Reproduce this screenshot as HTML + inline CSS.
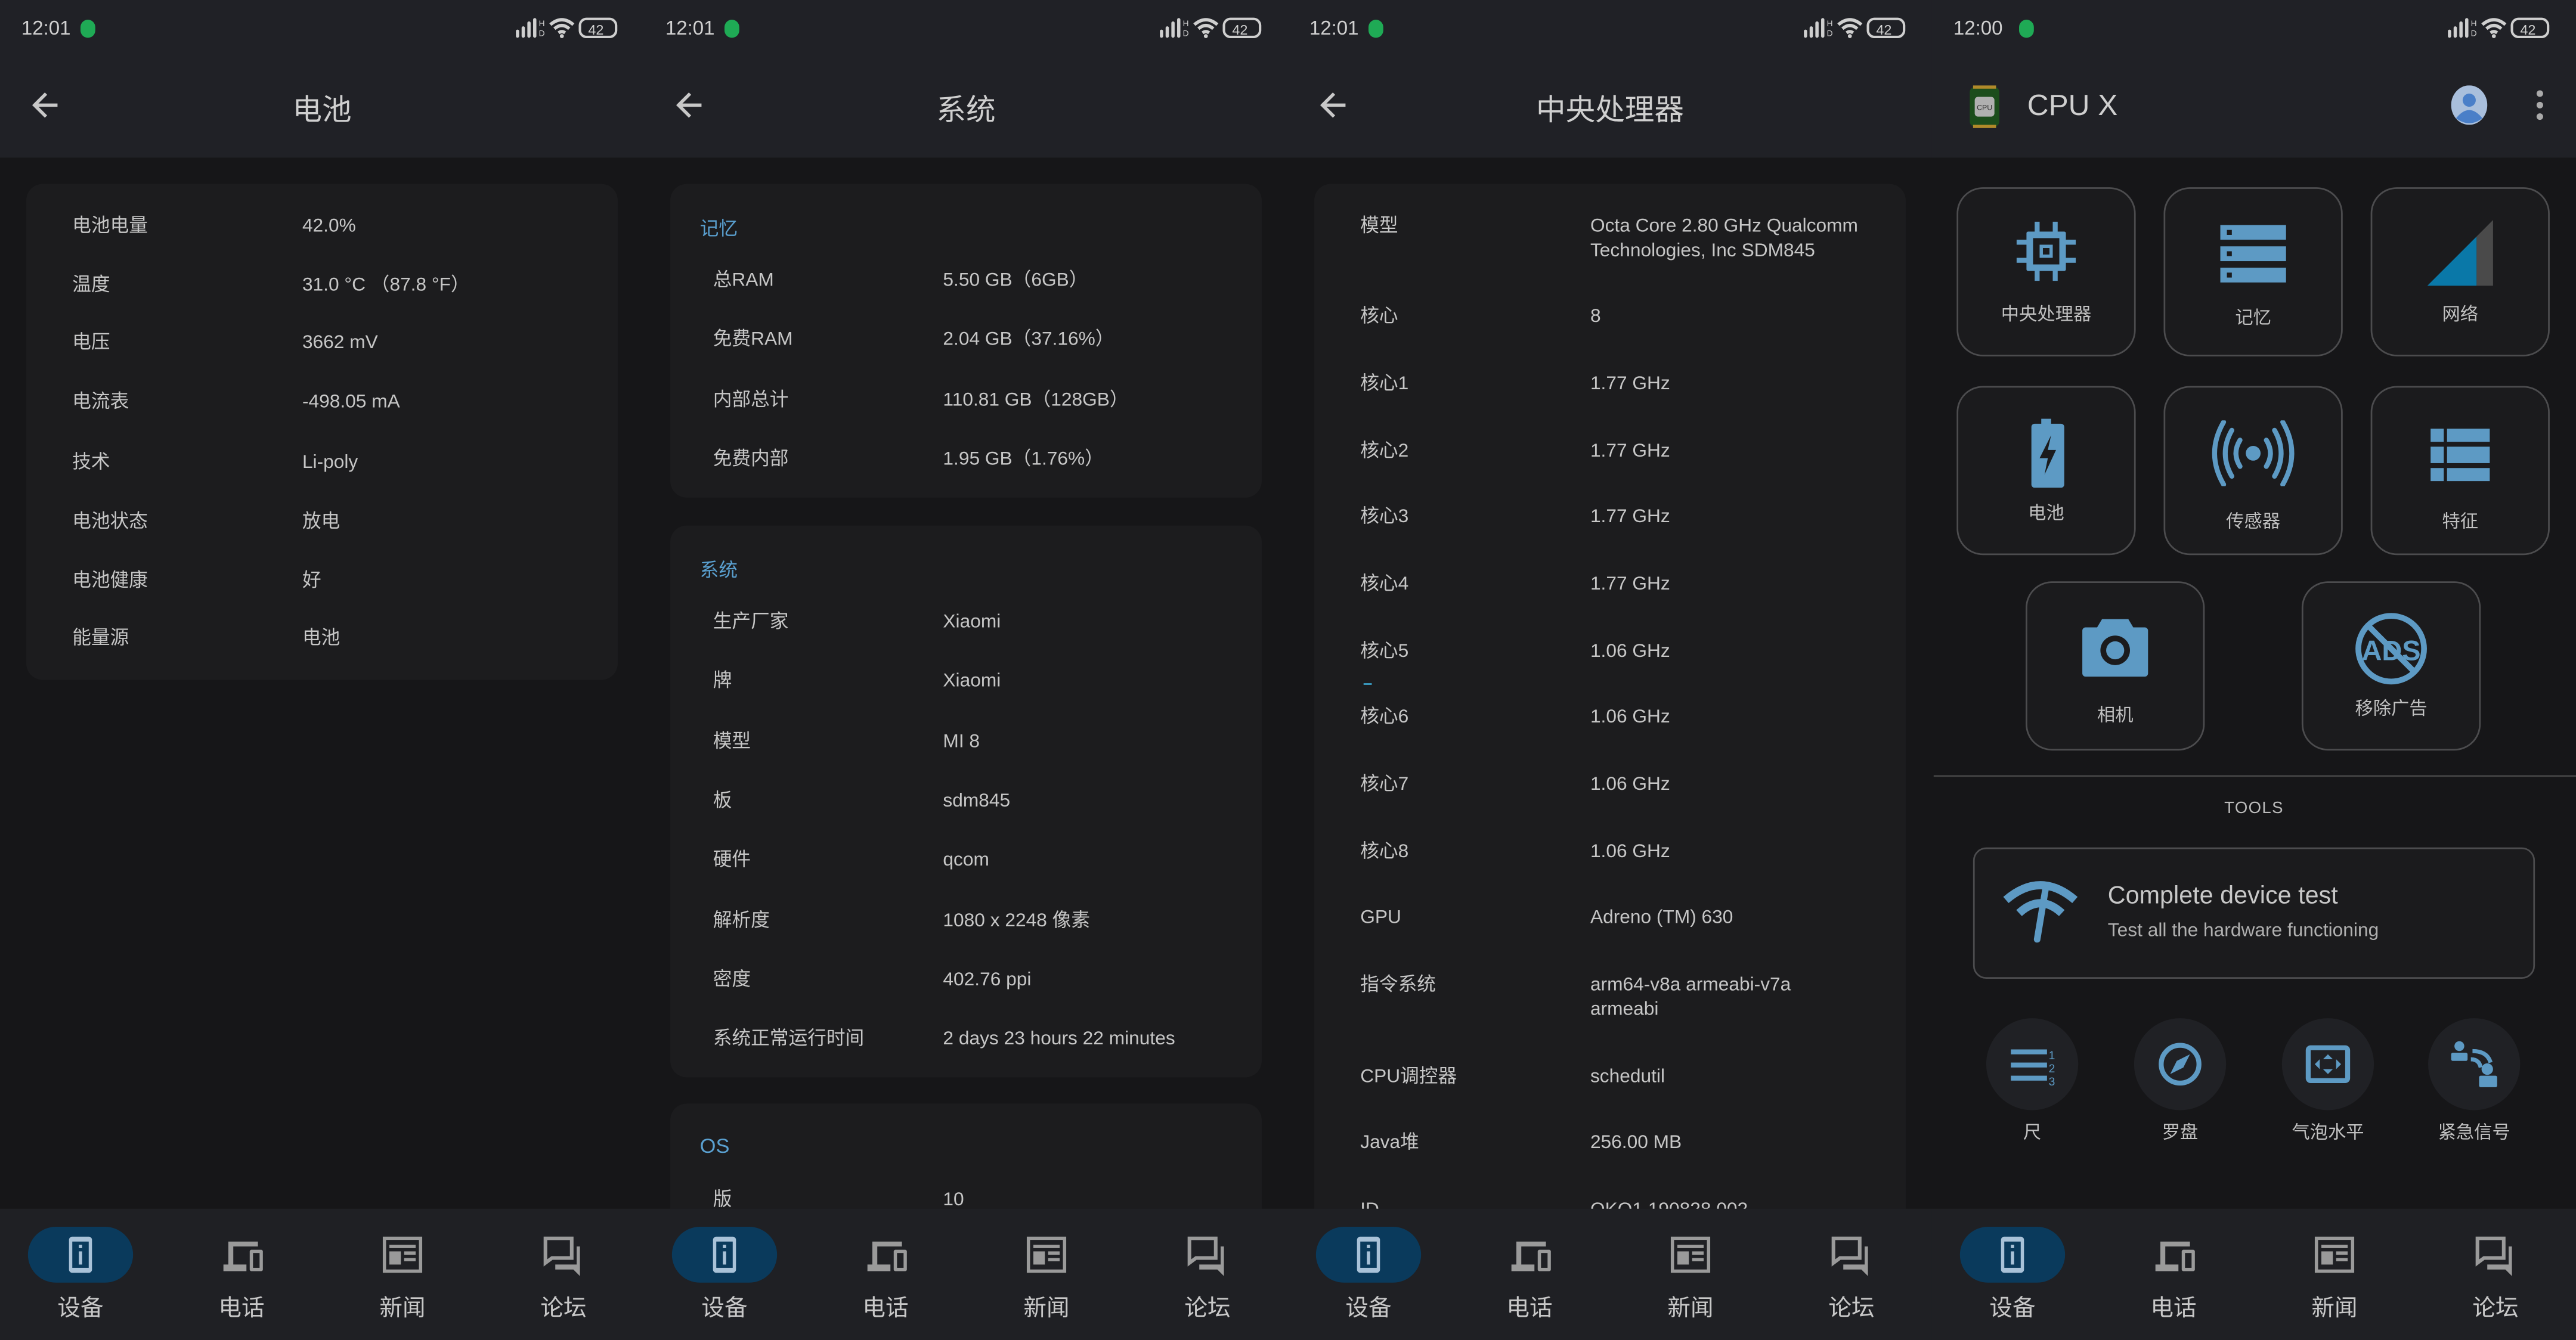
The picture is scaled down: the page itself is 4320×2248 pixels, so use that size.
<!DOCTYPE html>
<html><head><meta charset="utf-8">
<style>
html,body{margin:0;padding:0;background:#161618;width:4320px;height:2248px;overflow:hidden}
#w{position:absolute;left:0;top:0;width:1568px;height:816px;transform:scale(2.755102);transform-origin:0 0;font-family:"Liberation Sans","Noto Sans CJK SC",sans-serif;color:#c4c4c4}
.p{position:absolute;top:0;width:392px;height:816px;background:#161618;overflow:hidden}
.hd{position:absolute;left:0;top:0;width:392px;height:96px;background:#202126}
.tm{position:absolute;left:13px;top:10px;font-size:12px;color:#d0d0d0}
.dot{position:absolute;left:49px;top:12px;width:9px;height:11px;border-radius:5px;background:#1faa55}
.sb{position:absolute;right:14px;top:10px}
.ttl{position:absolute;left:0;width:392px;top:53px;text-align:center;font-size:18px;color:#cfcfcf}
.bk{position:absolute;left:18px;top:54px}
.cd{position:absolute;background:#1c1c1e;border-radius:10px}
.r{position:absolute;font-size:11.5px;line-height:15px;color:#c6c6c6;white-space:nowrap}
.sec{position:absolute;font-size:11.5px;color:#5aa0d0}
.nav{position:absolute;left:0;top:736px;width:392px;height:80px;background:#1f2024}
.ni{position:absolute;top:17px;width:40px;margin-left:-20px;text-align:center}
.nl{position:absolute;top:50px;width:60px;margin-left:-30px;text-align:center;font-size:14px;color:#c8c8c8}
.pill{position:absolute;left:17px;top:11px;width:64px;height:34px;border-radius:17px;background:#0a3a5c}
.tile{position:absolute;width:107px;height:101px;border:1.3px solid #4c4c4e;border-radius:16px;background:#1b1b1d}
.tl{position:absolute;left:0;width:100%;text-align:center;font-size:11px;color:#c0c0c0}
.ti{position:absolute;left:0;width:100%;text-align:center}
.circ{position:absolute;width:56px;height:56px;border-radius:50%;background:#202125}
.cl{position:absolute;width:90px;text-align:center;font-size:11px;color:#c0c0c0}
</style></head><body><div id="w">

<svg width="0" height="0" style="position:absolute">
<defs>
<g id="sbi">
<rect x="0" y="8" width="2" height="5" rx="1" fill="#cfcfcf"/><rect x="3.5" y="6" width="2" height="7" rx="1" fill="#cfcfcf"/><rect x="7" y="3" width="2" height="10" rx="1" fill="#cfcfcf"/><rect x="10.5" y="1" width="2" height="12" rx="1" fill="#cfcfcf"/>
<text x="14" y="6" font-size="5" fill="#cfcfcf" font-family="Liberation Sans">H</text><text x="14" y="12" font-size="5" fill="#cfcfcf" font-family="Liberation Sans">D</text>
<path d="M21 5 Q28 -1 35 5 M23.5 7.5 Q28 3.5 32.5 7.5 M26 10 Q28 8.5 30 10" stroke="#cfcfcf" stroke-width="2" fill="none"/>
<circle cx="28" cy="12" r="1.2" fill="#cfcfcf"/>
<rect x="39" y="1.5" width="22" height="11" rx="4" stroke="#cfcfcf" stroke-width="1.5" fill="none"/>
<text x="44" y="11" font-size="8.5" fill="#cfcfcf" font-family="Liberation Sans">42</text>
</g>
</defs></svg>

<!-- ============ PANEL 1 ============ -->
<div class="p" style="left:0">
<div class="hd"><div class="tm">12:01</div><div class="dot"></div>
<svg class="sb" width="64" height="14"><use href="#sbi"/></svg>
<svg class="bk" width="20" height="20"><path d="M17 10H3M10 3L3 10l7 7" stroke="#c8c8c8" stroke-width="2" fill="none"/></svg>
<div class="ttl">电池</div></div>
<div class="cd" style="left:16px;top:112px;width:360px;height:302px"></div>
<div class="r" style="left:44px;top:131px">电池电量</div><div class="r" style="left:184px;top:131px">42.0%</div>
<div class="r" style="left:44px;top:167px">温度</div><div class="r" style="left:184px;top:167px">31.0 °C （87.8 °F）</div>
<div class="r" style="left:44px;top:202px">电压</div><div class="r" style="left:184px;top:202px">3662 mV</div>
<div class="r" style="left:44px;top:238px">电流表</div><div class="r" style="left:184px;top:238px">-498.05 mA</div>
<div class="r" style="left:44px;top:275px">技术</div><div class="r" style="left:184px;top:275px">Li-poly</div>
<div class="r" style="left:44px;top:311px">电池状态</div><div class="r" style="left:184px;top:311px">放电</div>
<div class="r" style="left:44px;top:347px">电池健康</div><div class="r" style="left:184px;top:347px">好</div>
<div class="r" style="left:44px;top:382px">能量源</div><div class="r" style="left:184px;top:382px">电池</div>
<div class="nav">
<div class="pill"></div>
<svg class="ni" style="left:49px" width="40" height="24" viewBox="-12 0 40 24"><rect x="1" y="0" width="14" height="22" rx="2" fill="#a9c2d8"/><rect x="3" y="3" width="10" height="16" fill="#0a3a5c"/><rect x="7" y="5" width="2" height="2" fill="#a9c2d8"/><rect x="7" y="9" width="2" height="8" fill="#a9c2d8"/></svg>
<svg class="ni" style="left:147px" width="40" height="24" viewBox="-8 0 40 24"><path d="M4 3h18v3H7v11h8v4H1v-4h3z" fill="#9a9a9a"/><rect x="17" y="8" width="8" height="13" rx="1" fill="#9a9a9a"/><rect x="19" y="10" width="4" height="9" fill="#1f2024"/></svg>
<svg class="ni" style="left:245px" width="40" height="24" viewBox="-8 0 40 24"><rect x="1" y="1" width="22" height="20" fill="none" stroke="#9a9a9a" stroke-width="2"/><rect x="4" y="5" width="16" height="2" fill="#9a9a9a"/><rect x="4" y="9" width="7" height="8" fill="#9a9a9a"/><rect x="13" y="9" width="7" height="2" fill="#9a9a9a"/><rect x="13" y="13" width="7" height="2" fill="#9a9a9a"/></svg>
<svg class="ni" style="left:343px" width="40" height="24" viewBox="-8 0 40 24"><path d="M1 1h16v12H5l-4 3z" fill="none" stroke="#9a9a9a" stroke-width="2.2"/><path d="M20 6h2v18l-4-4H7v-3h13z" fill="#9a9a9a"/></svg>
<div class="nl" style="left:49px">设备</div><div class="nl" style="left:147px">电话</div><div class="nl" style="left:245px">新闻</div><div class="nl" style="left:343px">论坛</div>
</div>
</div>

<!-- ============ PANEL 2 ============ -->
<div class="p" style="left:392px">
<div class="hd"><div class="tm">12:01</div><div class="dot"></div>
<svg class="sb" width="64" height="14"><use href="#sbi"/></svg>
<svg class="bk" width="20" height="20"><path d="M17 10H3M10 3L3 10l7 7" stroke="#c8c8c8" stroke-width="2" fill="none"/></svg>
<div class="ttl">系统</div></div>
<div class="cd" style="left:16px;top:112px;width:360px;height:191px"></div>
<div class="sec" style="left:34px;top:131px">记忆</div>
<div class="r" style="left:42px;top:164px">总RAM</div><div class="r" style="left:182px;top:164px">5.50 GB（6GB）</div>
<div class="r" style="left:42px;top:200px">免费RAM</div><div class="r" style="left:182px;top:200px">2.04 GB（37.16%）</div>
<div class="r" style="left:42px;top:237px">内部总计</div><div class="r" style="left:182px;top:237px">110.81 GB（128GB）</div>
<div class="r" style="left:42px;top:273px">免费内部</div><div class="r" style="left:182px;top:273px">1.95 GB（1.76%）</div>
<div class="cd" style="left:16px;top:320px;width:360px;height:336px"></div>
<div class="sec" style="left:34px;top:339px">系统</div>
<div class="r" style="left:42px;top:372px">生产厂家</div><div class="r" style="left:182px;top:372px">Xiaomi</div>
<div class="r" style="left:42px;top:408px">牌</div><div class="r" style="left:182px;top:408px">Xiaomi</div>
<div class="r" style="left:42px;top:445px">模型</div><div class="r" style="left:182px;top:445px">MI 8</div>
<div class="r" style="left:42px;top:481px">板</div><div class="r" style="left:182px;top:481px">sdm845</div>
<div class="r" style="left:42px;top:517px">硬件</div><div class="r" style="left:182px;top:517px">qcom</div>
<div class="r" style="left:42px;top:554px">解析度</div><div class="r" style="left:182px;top:554px">1080 x 2248 像素</div>
<div class="r" style="left:42px;top:590px">密度</div><div class="r" style="left:182px;top:590px">402.76 ppi</div>
<div class="r" style="left:42px;top:626px">系统正常运行时间</div><div class="r" style="left:182px;top:626px">2 days 23 hours 22 minutes</div>
<div class="cd" style="left:16px;top:672px;width:360px;height:100px"></div>
<div class="sec" style="left:34px;top:691px;font-size:12.5px">OS</div>
<div class="r" style="left:42px;top:724px">版</div><div class="r" style="left:182px;top:724px">10</div>
<div class="nav">
<div class="pill"></div>
<svg class="ni" style="left:49px" width="40" height="24" viewBox="-12 0 40 24"><rect x="1" y="0" width="14" height="22" rx="2" fill="#a9c2d8"/><rect x="3" y="3" width="10" height="16" fill="#0a3a5c"/><rect x="7" y="5" width="2" height="2" fill="#a9c2d8"/><rect x="7" y="9" width="2" height="8" fill="#a9c2d8"/></svg>
<svg class="ni" style="left:147px" width="40" height="24" viewBox="-8 0 40 24"><path d="M4 3h18v3H7v11h8v4H1v-4h3z" fill="#9a9a9a"/><rect x="17" y="8" width="8" height="13" rx="1" fill="#9a9a9a"/><rect x="19" y="10" width="4" height="9" fill="#1f2024"/></svg>
<svg class="ni" style="left:245px" width="40" height="24" viewBox="-8 0 40 24"><rect x="1" y="1" width="22" height="20" fill="none" stroke="#9a9a9a" stroke-width="2"/><rect x="4" y="5" width="16" height="2" fill="#9a9a9a"/><rect x="4" y="9" width="7" height="8" fill="#9a9a9a"/><rect x="13" y="9" width="7" height="2" fill="#9a9a9a"/><rect x="13" y="13" width="7" height="2" fill="#9a9a9a"/></svg>
<svg class="ni" style="left:343px" width="40" height="24" viewBox="-8 0 40 24"><path d="M1 1h16v12H5l-4 3z" fill="none" stroke="#9a9a9a" stroke-width="2.2"/><path d="M20 6h2v18l-4-4H7v-3h13z" fill="#9a9a9a"/></svg>
<div class="nl" style="left:49px">设备</div><div class="nl" style="left:147px">电话</div><div class="nl" style="left:245px">新闻</div><div class="nl" style="left:343px">论坛</div>
</div>
</div>

<!-- ============ PANEL 3 ============ -->
<div class="p" style="left:784px">
<div class="hd"><div class="tm">12:01</div><div class="dot"></div>
<svg class="sb" width="64" height="14"><use href="#sbi"/></svg>
<svg class="bk" width="20" height="20"><path d="M17 10H3M10 3L3 10l7 7" stroke="#c8c8c8" stroke-width="2" fill="none"/></svg>
<div class="ttl">中央处理器</div></div>
<div class="cd" style="left:16px;top:112px;width:360px;height:700px"></div>
<div class="r" style="left:44px;top:131px">模型</div><div class="r" style="left:184px;top:131px">Octa Core 2.80 GHz Qualcomm<br>Technologies, Inc SDM845</div>
<div class="r" style="left:44px;top:186px">核心</div><div class="r" style="left:184px;top:186px">8</div>
<div class="r" style="left:44px;top:227px">核心1</div><div class="r" style="left:184px;top:227px">1.77 GHz</div>
<div class="r" style="left:44px;top:268px">核心2</div><div class="r" style="left:184px;top:268px">1.77 GHz</div>
<div class="r" style="left:44px;top:308px">核心3</div><div class="r" style="left:184px;top:308px">1.77 GHz</div>
<div class="r" style="left:44px;top:349px">核心4</div><div class="r" style="left:184px;top:349px">1.77 GHz</div>
<div class="r" style="left:44px;top:390px">核心5</div><div class="r" style="left:184px;top:390px">1.06 GHz</div>
<div style="position:absolute;left:46px;top:416px;width:5px;height:1px;background:#3aa0c8"></div>
<div class="r" style="left:44px;top:430px">核心6</div><div class="r" style="left:184px;top:430px">1.06 GHz</div>
<div class="r" style="left:44px;top:471px">核心7</div><div class="r" style="left:184px;top:471px">1.06 GHz</div>
<div class="r" style="left:44px;top:512px">核心8</div><div class="r" style="left:184px;top:512px">1.06 GHz</div>
<div class="r" style="left:44px;top:552px">GPU</div><div class="r" style="left:184px;top:552px">Adreno (TM) 630</div>
<div class="r" style="left:44px;top:593px">指令系统</div><div class="r" style="left:184px;top:593px">arm64-v8a armeabi-v7a<br>armeabi</div>
<div class="r" style="left:44px;top:649px">CPU调控器</div><div class="r" style="left:184px;top:649px">schedutil</div>
<div class="r" style="left:44px;top:689px">Java堆</div><div class="r" style="left:184px;top:689px">256.00 MB</div>
<div class="r" style="left:44px;top:730px">ID</div><div class="r" style="left:184px;top:730px">OKQ1.190828.002</div>
<div class="nav">
<div class="pill"></div>
<svg class="ni" style="left:49px" width="40" height="24" viewBox="-12 0 40 24"><rect x="1" y="0" width="14" height="22" rx="2" fill="#a9c2d8"/><rect x="3" y="3" width="10" height="16" fill="#0a3a5c"/><rect x="7" y="5" width="2" height="2" fill="#a9c2d8"/><rect x="7" y="9" width="2" height="8" fill="#a9c2d8"/></svg>
<svg class="ni" style="left:147px" width="40" height="24" viewBox="-8 0 40 24"><path d="M4 3h18v3H7v11h8v4H1v-4h3z" fill="#9a9a9a"/><rect x="17" y="8" width="8" height="13" rx="1" fill="#9a9a9a"/><rect x="19" y="10" width="4" height="9" fill="#1f2024"/></svg>
<svg class="ni" style="left:245px" width="40" height="24" viewBox="-8 0 40 24"><rect x="1" y="1" width="22" height="20" fill="none" stroke="#9a9a9a" stroke-width="2"/><rect x="4" y="5" width="16" height="2" fill="#9a9a9a"/><rect x="4" y="9" width="7" height="8" fill="#9a9a9a"/><rect x="13" y="9" width="7" height="2" fill="#9a9a9a"/><rect x="13" y="13" width="7" height="2" fill="#9a9a9a"/></svg>
<svg class="ni" style="left:343px" width="40" height="24" viewBox="-8 0 40 24"><path d="M1 1h16v12H5l-4 3z" fill="none" stroke="#9a9a9a" stroke-width="2.2"/><path d="M20 6h2v18l-4-4H7v-3h13z" fill="#9a9a9a"/></svg>
<div class="nl" style="left:49px">设备</div><div class="nl" style="left:147px">电话</div><div class="nl" style="left:245px">新闻</div><div class="nl" style="left:343px">论坛</div>
</div>
</div>

<!-- ============ PANEL 4 ============ -->
<div class="p" style="left:1176px">
<div class="hd"><div class="tm">12:00</div><div class="dot" style="left:53px"></div>
<svg class="sb" width="64" height="14"><use href="#sbi"/></svg>
<svg style="position:absolute;left:20px;top:52px" width="24" height="26"><rect x="3" y="1" width="18" height="24" rx="3" fill="#1c4d1c"/><rect x="5" y="0" width="14" height="2" fill="#b08a2a"/><rect x="5" y="24" width="14" height="2" fill="#b08a2a"/><rect x="6" y="7" width="12" height="12" rx="2" fill="#b0b0b0"/><text x="12" y="15" font-size="4.5" text-anchor="middle" fill="#333" font-family="Liberation Sans">CPU</text></svg>
<div style="position:absolute;left:58px;top:54px;font-size:18px;color:#cfcfcf">CPU X</div>
<svg style="position:absolute;left:315px;top:52px" width="24" height="24"><ellipse cx="12" cy="12" rx="11" ry="12" fill="#a9bfdc"/><circle cx="12" cy="9" r="4" fill="#4a7fc8"/><path d="M4 20 Q12 10 20 20 Q12 26 4 20z" fill="#4a7fc8"/></svg>
<svg style="position:absolute;left:366px;top:54px" width="8" height="20"><circle cx="4" cy="3" r="2" fill="#aaa"/><circle cx="4" cy="10" r="2" fill="#aaa"/><circle cx="4" cy="17" r="2" fill="#aaa"/></svg>
</div>

<div class="tile" style="left:15px;top:114px"><svg class="ti" style="top:18px" width="107" height="40" viewBox="-33.5 0 107 40"><g fill="#5d9ac4"><rect x="8" y="8" width="24" height="24" rx="1"/><rect x="13" y="2" width="3" height="36"/><rect x="24" y="2" width="3" height="36"/><rect x="2" y="13" width="36" height="3"/><rect x="2" y="24" width="36" height="3"/></g><rect x="12" y="12" width="16" height="16" fill="#1b1b1d"/><rect x="16" y="16" width="8" height="8" fill="#5d9ac4"/><rect x="18" y="18" width="4" height="4" fill="#1b1b1d"/></svg><div class="tl" style="top:68px">中央处理器</div></div>
<div class="tile" style="left:141px;top:114px"><svg class="ti" style="top:22px" width="107" height="36" viewBox="-33.5 0 107 36"><g fill="#5d9ac4"><rect x="0" y="0" width="40" height="9"/><rect x="0" y="13" width="40" height="9"/><rect x="0" y="26" width="40" height="9"/></g><g fill="#1b1b1d"><rect x="4" y="3" width="3" height="3"/><rect x="4" y="16" width="3" height="3"/><rect x="4" y="29" width="3" height="3"/></g></svg><div class="tl" style="top:70px">记忆</div></div>
<div class="tile" style="left:267px;top:114px"><svg class="ti" style="top:19px" width="107" height="42" viewBox="-33.5 0 107 42"><path d="M0 40 L30 10 L30 40z" fill="#0a78a8"/><path d="M30 10 L40 0 L40 40 L30 40z" fill="#4a4a4a"/></svg><div class="tl" style="top:68px">网络</div></div>

<div class="tile" style="left:15px;top:235px"><svg class="ti" style="top:19px" width="107" height="42" viewBox="-42.5 0 107 42"><rect x="8" y="0" width="6" height="4" fill="#5d9ac4"/><rect x="2" y="3" width="20" height="39" rx="2" fill="#5d9ac4"/><path d="M14 10 L7 24 L12 24 L10 34 L17 19 L12 19z" fill="#1b1b1d"/></svg><div class="tl" style="top:68px">电池</div></div>
<div class="tile" style="left:141px;top:235px"><svg class="ti" style="top:20px" width="107" height="40" viewBox="-31.5 0 107 40"><circle cx="22" cy="20" r="4.5" fill="#5d9ac4"/><g stroke="#5d9ac4" stroke-width="3" fill="none" stroke-linecap="round"><path d="M14 12 Q9 20 14 28M30 12 Q35 20 30 28M9 6 Q1 20 9 34M35 6 Q43 20 35 34M4 1 Q-7 20 4 39M40 1 Q51 20 40 39"/></g></svg><div class="tl" style="top:73px">传感器</div></div>
<div class="tile" style="left:267px;top:235px"><svg class="ti" style="top:25px" width="107" height="32" viewBox="-35.5 0 107 32"><g fill="#5d9ac4"><rect x="0" y="0" width="8" height="8"/><rect x="10" y="0" width="26" height="8"/><rect x="0" y="11" width="8" height="10"/><rect x="10" y="11" width="26" height="10"/><rect x="0" y="24" width="8" height="8"/><rect x="10" y="24" width="26" height="8"/></g></svg><div class="tl" style="top:73px">特征</div></div>

<div class="tile" style="left:57px;top:354px"><svg class="ti" style="top:20px" width="107" height="40" viewBox="-33.5 0 107 40"><path d="M12 2h16l3 5h7a2 2 0 0 1 2 2v26a2 2 0 0 1-2 2H2a2 2 0 0 1-2-2V9a2 2 0 0 1 2-2h7z" fill="#5d9ac4"/><circle cx="20" cy="21" r="9" fill="#1b1b1d"/><circle cx="20" cy="21" r="5.5" fill="#5d9ac4"/></svg><div class="tl" style="top:72px">相机</div></div>
<div class="tile" style="left:225px;top:354px"><svg class="ti" style="top:17px" width="107" height="46" viewBox="-30.5 0 107 46"><circle cx="23" cy="23" r="20" stroke="#5d9ac4" stroke-width="3.5" fill="none"/><text x="23" y="30" text-anchor="middle" font-size="17" font-weight="bold" fill="#5d9ac4" font-family="Liberation Sans">ADS</text><path d="M9 9 L37 37" stroke="#5d9ac4" stroke-width="3.5"/></svg><div class="tl" style="top:68px">移除广告</div></div>

<div style="position:absolute;left:1px;top:472px;width:391px;height:1px;background:#444"></div>
<div style="position:absolute;left:0;width:392px;top:487px;text-align:center;font-size:10px;color:#bbb;letter-spacing:.5px">TOOLS</div>

<div style="position:absolute;left:25px;top:516px;width:340px;height:78px;border:1.3px solid #4c4c4e;border-radius:8px;background:#1b1b1d"></div>
<svg style="position:absolute;left:42px;top:534px" width="48" height="40"><g stroke="#5d9ac4" stroke-width="5" fill="none"><path d="M3 14 Q24 -4 45 14"/><path d="M11 22 Q24 10 37 22"/></g><path d="M27 8 L22 38" stroke="#5d9ac4" stroke-width="4" stroke-linecap="round"/></svg>
<div style="position:absolute;left:107px;top:537px;font-size:15px;color:#c8c8c8">Complete device test</div>
<div style="position:absolute;left:107px;top:561px;font-size:11.5px;color:#b0b0b0">Test all the hardware functioning</div>

<div class="circ" style="left:33px;top:620px"></div>
<svg style="position:absolute;left:46px;top:637px" width="34" height="24"><g fill="#5d9ac4"><rect x="2" y="2" width="22" height="3"/><rect x="2" y="10" width="22" height="3"/><rect x="2" y="18" width="22" height="3"/></g><text x="25" y="8" font-size="7" fill="#5d9ac4" font-family="Liberation Sans">1</text><text x="25" y="16" font-size="7" fill="#5d9ac4" font-family="Liberation Sans">2</text><text x="25" y="24" font-size="7" fill="#5d9ac4" font-family="Liberation Sans">3</text></svg>
<div class="circ" style="left:123px;top:620px"></div>
<svg style="position:absolute;left:137px;top:634px" width="28" height="28"><circle cx="14" cy="14" r="11.5" stroke="#5d9ac4" stroke-width="3" fill="none"/><path d="M20 8 L16 16 L8 20 L12 12z" fill="#5d9ac4"/></svg>
<div class="circ" style="left:213px;top:620px"></div>
<svg style="position:absolute;left:227px;top:636px" width="28" height="24"><rect x="2" y="2" width="24" height="20" rx="1.5" stroke="#5d9ac4" stroke-width="3" fill="none"/><g fill="#5d9ac4"><path d="M14 6l3 3h-6z"/><path d="M14 18l3-3h-6z"/><path d="M6 12l3-3v6z"/><path d="M22 12l-3-3v6z"/></g></svg>
<div class="circ" style="left:302px;top:620px"></div>
<svg style="position:absolute;left:315px;top:633px" width="32" height="30"><g fill="#5d9ac4"><circle cx="6" cy="4" r="3"/><rect x="1" y="8" width="10" height="5" rx="1"/><circle cx="23" cy="18" r="3.5"/><rect x="18" y="22" width="11" height="7" rx="1"/></g><g stroke="#5d9ac4" stroke-width="2.5" fill="none"><path d="M13 12 Q18 12 19 17"/><path d="M14 7 Q23 7 25 14"/></g></svg>
<div class="cl" style="left:16px;top:681px">尺</div>
<div class="cl" style="left:106px;top:681px">罗盘</div>
<div class="cl" style="left:196px;top:681px">气泡水平</div>
<div class="cl" style="left:285px;top:681px">紧急信号</div>

<div class="nav">
<div class="pill"></div>
<svg class="ni" style="left:49px" width="40" height="24" viewBox="-12 0 40 24"><rect x="1" y="0" width="14" height="22" rx="2" fill="#a9c2d8"/><rect x="3" y="3" width="10" height="16" fill="#0a3a5c"/><rect x="7" y="5" width="2" height="2" fill="#a9c2d8"/><rect x="7" y="9" width="2" height="8" fill="#a9c2d8"/></svg>
<svg class="ni" style="left:147px" width="40" height="24" viewBox="-8 0 40 24"><path d="M4 3h18v3H7v11h8v4H1v-4h3z" fill="#9a9a9a"/><rect x="17" y="8" width="8" height="13" rx="1" fill="#9a9a9a"/><rect x="19" y="10" width="4" height="9" fill="#1f2024"/></svg>
<svg class="ni" style="left:245px" width="40" height="24" viewBox="-8 0 40 24"><rect x="1" y="1" width="22" height="20" fill="none" stroke="#9a9a9a" stroke-width="2"/><rect x="4" y="5" width="16" height="2" fill="#9a9a9a"/><rect x="4" y="9" width="7" height="8" fill="#9a9a9a"/><rect x="13" y="9" width="7" height="2" fill="#9a9a9a"/><rect x="13" y="13" width="7" height="2" fill="#9a9a9a"/></svg>
<svg class="ni" style="left:343px" width="40" height="24" viewBox="-8 0 40 24"><path d="M1 1h16v12H5l-4 3z" fill="none" stroke="#9a9a9a" stroke-width="2.2"/><path d="M20 6h2v18l-4-4H7v-3h13z" fill="#9a9a9a"/></svg>
<div class="nl" style="left:49px">设备</div><div class="nl" style="left:147px">电话</div><div class="nl" style="left:245px">新闻</div><div class="nl" style="left:343px">论坛</div>
</div>
</div>

</div></body></html>
